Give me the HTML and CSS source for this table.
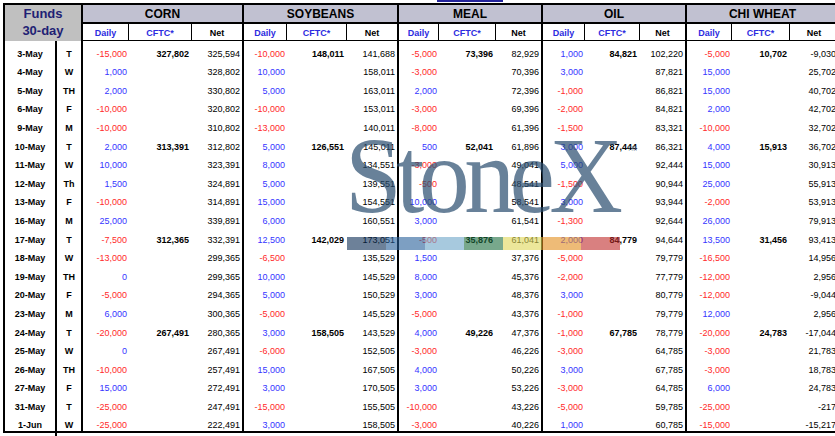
FILE: index.html
```html
<!DOCTYPE html>
<html lang="en">
<head>
<meta charset="utf-8">
<title>Funds 30-day</title>
<link rel="stylesheet" href="styles.css">
</head>
<body>
<div class="page">
  <div class="topline"><span class="link-line"></span></div>
  <div class="sheet">
    <div class="head">
      <div class="funds"><span>Funds</span><span>30-day</span></div>
      <div class="title">CORN</div>
      <div class="title">SOYBEANS</div>
      <div class="title">MEAL</div>
      <div class="title">OIL</div>
      <div class="title last">CHI WHEAT</div>
      <div class="sub blue">Daily</div><div class="sub blue">CFTC*</div><div class="sub net">Net</div>
      <div class="sub blue">Daily</div><div class="sub blue">CFTC*</div><div class="sub net">Net</div>
      <div class="sub blue">Daily</div><div class="sub blue">CFTC*</div><div class="sub net">Net</div>
      <div class="sub blue">Daily</div><div class="sub blue">CFTC*</div><div class="sub net">Net</div>
      <div class="sub blue">Daily</div><div class="sub blue">CFTC*</div><div class="sub net last">Net</div>
    </div>

    <div class="row"><span class="d">3-May</span><span class="w">T</span><span class="neg">-15,000</span><span class="cf">327,802</span><span class="ge">325,594</span><span class="neg">-10,000</span><span class="cf">148,011</span><span class="ge">141,688</span><span class="neg">-5,000</span><span class="cf">73,396</span><span class="ge">82,929</span><span class="pos">1,000</span><span class="cf">84,821</span><span class="ge">102,220</span><span class="neg">-5,000</span><span class="cf">10,702</span><span>-9,030</span></div>
    <div class="row"><span class="d">4-May</span><span class="w">W</span><span class="pos">1,000</span><span class="cf"></span><span class="ge">328,802</span><span class="pos">10,000</span><span class="cf"></span><span class="ge">158,011</span><span class="neg">-3,000</span><span class="cf"></span><span class="ge">70,396</span><span class="pos">3,000</span><span class="cf"></span><span class="ge">87,821</span><span class="pos">15,000</span><span class="cf"></span><span>25,702</span></div>
    <div class="row"><span class="d">5-May</span><span class="w">TH</span><span class="pos">2,000</span><span class="cf"></span><span class="ge">330,802</span><span class="pos">5,000</span><span class="cf"></span><span class="ge">163,011</span><span class="pos">2,000</span><span class="cf"></span><span class="ge">72,396</span><span class="neg">-1,000</span><span class="cf"></span><span class="ge">86,821</span><span class="pos">15,000</span><span class="cf"></span><span>40,702</span></div>
    <div class="row"><span class="d">6-May</span><span class="w">F</span><span class="neg">-10,000</span><span class="cf"></span><span class="ge">320,802</span><span class="neg">-10,000</span><span class="cf"></span><span class="ge">153,011</span><span class="neg">-3,000</span><span class="cf"></span><span class="ge">69,396</span><span class="neg">-2,000</span><span class="cf"></span><span class="ge">84,821</span><span class="pos">2,000</span><span class="cf"></span><span>42,702</span></div>
    <div class="row"><span class="d">9-May</span><span class="w">M</span><span class="neg">-10,000</span><span class="cf"></span><span class="ge">310,802</span><span class="neg">-13,000</span><span class="cf"></span><span class="ge">140,011</span><span class="neg">-8,000</span><span class="cf"></span><span class="ge">61,396</span><span class="neg">-1,500</span><span class="cf"></span><span class="ge">83,321</span><span class="neg">-10,000</span><span class="cf"></span><span>32,702</span></div>
    <div class="row"><span class="d">10-May</span><span class="w">T</span><span class="pos">2,000</span><span class="cf">313,391</span><span class="ge">312,802</span><span class="pos">5,000</span><span class="cf">126,551</span><span class="ge">145,011</span><span class="pos">500</span><span class="cf">52,041</span><span class="ge">61,896</span><span class="pos">3,000</span><span class="cf">87,444</span><span class="ge">86,321</span><span class="pos">4,000</span><span class="cf">15,913</span><span>36,702</span></div>
    <div class="row"><span class="d">11-May</span><span class="w">W</span><span class="pos">10,000</span><span class="cf"></span><span class="ge">323,391</span><span class="pos">8,000</span><span class="cf"></span><span class="ge">134,551</span><span class="neg">-3,000</span><span class="cf"></span><span class="ge">49,041</span><span class="pos">5,000</span><span class="cf"></span><span class="ge">92,444</span><span class="pos">15,000</span><span class="cf"></span><span>30,913</span></div>
    <div class="row"><span class="d">12-May</span><span class="w">Th</span><span class="pos">1,500</span><span class="cf"></span><span class="ge">324,891</span><span class="pos">5,000</span><span class="cf"></span><span class="ge">139,551</span><span class="neg">-500</span><span class="cf"></span><span class="ge">48,541</span><span class="neg">-1,500</span><span class="cf"></span><span class="ge">90,944</span><span class="pos">25,000</span><span class="cf"></span><span>55,913</span></div>
    <div class="row"><span class="d">13-May</span><span class="w">F</span><span class="neg">-10,000</span><span class="cf"></span><span class="ge">314,891</span><span class="pos">15,000</span><span class="cf"></span><span class="ge">154,551</span><span class="pos">10,000</span><span class="cf"></span><span class="ge">58,541</span><span class="pos">3,000</span><span class="cf"></span><span class="ge">93,944</span><span class="neg">-2,000</span><span class="cf"></span><span>53,913</span></div>
    <div class="row"><span class="d">16-May</span><span class="w">M</span><span class="pos">25,000</span><span class="cf"></span><span class="ge">339,891</span><span class="pos">6,000</span><span class="cf"></span><span class="ge">160,551</span><span class="pos">3,000</span><span class="cf"></span><span class="ge">61,541</span><span class="neg">-1,300</span><span class="cf"></span><span class="ge">92,644</span><span class="pos">26,000</span><span class="cf"></span><span>79,913</span></div>
    <div class="row"><span class="d">17-May</span><span class="w">T</span><span class="neg">-7,500</span><span class="cf">312,365</span><span class="ge">332,391</span><span class="pos">12,500</span><span class="cf">142,029</span><span class="ge">173,051</span><span class="neg">-500</span><span class="cf">35,876</span><span class="ge">61,041</span><span class="pos">2,000</span><span class="cf">84,779</span><span class="ge">94,644</span><span class="pos">13,500</span><span class="cf">31,456</span><span>93,413</span></div>
    <div class="row"><span class="d">18-May</span><span class="w">W</span><span class="neg">-13,000</span><span class="cf"></span><span class="ge">299,365</span><span class="neg">-6,500</span><span class="cf"></span><span class="ge">135,529</span><span class="pos">1,500</span><span class="cf"></span><span class="ge">37,376</span><span class="neg">-5,000</span><span class="cf"></span><span class="ge">79,779</span><span class="neg">-16,500</span><span class="cf"></span><span>14,956</span></div>
    <div class="row"><span class="d">19-May</span><span class="w">TH</span><span class="pos">0</span><span class="cf"></span><span class="ge">299,365</span><span class="pos">10,000</span><span class="cf"></span><span class="ge">145,529</span><span class="pos">8,000</span><span class="cf"></span><span class="ge">45,376</span><span class="neg">-2,000</span><span class="cf"></span><span class="ge">77,779</span><span class="neg">-12,000</span><span class="cf"></span><span>2,956</span></div>
    <div class="row"><span class="d">20-May</span><span class="w">F</span><span class="neg">-5,000</span><span class="cf"></span><span class="ge">294,365</span><span class="pos">5,000</span><span class="cf"></span><span class="ge">150,529</span><span class="pos">3,000</span><span class="cf"></span><span class="ge">48,376</span><span class="pos">3,000</span><span class="cf"></span><span class="ge">80,779</span><span class="neg">-12,000</span><span class="cf"></span><span>-9,044</span></div>
    <div class="row"><span class="d">23-May</span><span class="w">M</span><span class="pos">6,000</span><span class="cf"></span><span class="ge">300,365</span><span class="neg">-5,000</span><span class="cf"></span><span class="ge">145,529</span><span class="neg">-5,000</span><span class="cf"></span><span class="ge">43,376</span><span class="neg">-1,000</span><span class="cf"></span><span class="ge">79,779</span><span class="pos">12,000</span><span class="cf"></span><span>2,956</span></div>
    <div class="row"><span class="d">24-May</span><span class="w">T</span><span class="neg">-20,000</span><span class="cf">267,491</span><span class="ge">280,365</span><span class="pos">3,000</span><span class="cf">158,505</span><span class="ge">143,529</span><span class="pos">4,000</span><span class="cf">49,226</span><span class="ge">47,376</span><span class="neg">-1,000</span><span class="cf">67,785</span><span class="ge">78,779</span><span class="neg">-20,000</span><span class="cf">24,783</span><span>-17,044</span></div>
    <div class="row"><span class="d">25-May</span><span class="w">W</span><span class="pos">0</span><span class="cf"></span><span class="ge">267,491</span><span class="neg">-6,000</span><span class="cf"></span><span class="ge">152,505</span><span class="neg">-3,000</span><span class="cf"></span><span class="ge">46,226</span><span class="neg">-3,000</span><span class="cf"></span><span class="ge">64,785</span><span class="neg">-3,000</span><span class="cf"></span><span>21,783</span></div>
    <div class="row"><span class="d">26-May</span><span class="w">TH</span><span class="neg">-10,000</span><span class="cf"></span><span class="ge">257,491</span><span class="pos">15,000</span><span class="cf"></span><span class="ge">167,505</span><span class="pos">4,000</span><span class="cf"></span><span class="ge">50,226</span><span class="pos">3,000</span><span class="cf"></span><span class="ge">67,785</span><span class="neg">-3,000</span><span class="cf"></span><span>18,783</span></div>
    <div class="row"><span class="d">27-May</span><span class="w">F</span><span class="pos">15,000</span><span class="cf"></span><span class="ge">272,491</span><span class="pos">3,000</span><span class="cf"></span><span class="ge">170,505</span><span class="pos">3,000</span><span class="cf"></span><span class="ge">53,226</span><span class="neg">-3,000</span><span class="cf"></span><span class="ge">64,785</span><span class="pos">6,000</span><span class="cf"></span><span>24,783</span></div>
    <div class="row"><span class="d">31-May</span><span class="w">T</span><span class="neg">-25,000</span><span class="cf"></span><span class="ge">247,491</span><span class="neg">-15,000</span><span class="cf"></span><span class="ge">155,505</span><span class="neg">-10,000</span><span class="cf"></span><span class="ge">43,226</span><span class="neg">-5,000</span><span class="cf"></span><span class="ge">59,785</span><span class="neg">-25,000</span><span class="cf"></span><span>-217</span></div>
    <div class="row"><span class="d">1-Jun</span><span class="w">W</span><span class="neg">-25,000</span><span class="cf"></span><span class="ge">222,491</span><span class="pos">3,000</span><span class="cf"></span><span class="ge">158,505</span><span class="neg">-3,000</span><span class="cf"></span><span class="ge">40,226</span><span class="pos">1,000</span><span class="cf"></span><span class="ge">60,785</span><span class="neg">-15,000</span><span class="cf"></span><span>-15,217</span></div>
  </div>
  <div class="stub"></div>

  <div class="logo" aria-hidden="true">StoneX</div>
  <div class="tm" aria-hidden="true">TM</div>
  <div class="stripe" aria-hidden="true">
    <span class="s1"></span><span class="s2"></span><span class="s3"></span><span class="s4"></span><span class="s5"></span><span class="s6"></span><span class="s7"></span>
  </div>
</div>
</body>
</html>
```

FILE: styles.css
```css
:root {
  --cols: 52px 26px 46px 63px 52px 43px 60px 52px 40px 57px 47px 42px 55px 47px 45px 58px 48px;
}

* { box-sizing: border-box; }

html, body {
  margin: 0;
  padding: 0;
  background: #ffffff;
  overflow: hidden;
}

.page {
  position: relative;
  width: 835px;
  height: 436px;
  overflow: hidden;
  font-family: "Liberation Sans", Arial, sans-serif;
  color: #000;
}

.topline {
  height: 3px;
  display: flex;
}

.link-line {
  display: block;
  margin-left: 437px;
  width: 66px;
  height: 2px;
  background: #23239a;
}

.sheet {
  margin-left: 3px;
  width: 835px;
  border-left: 2px solid #000;
  border-top: 2px solid #000;
  border-bottom: 2px solid #000;
  display: flex;
  flex-direction: column;
}

.head {
  display: grid;
  grid-template-columns: var(--cols);
  grid-template-rows: 19px 17px;
}

.funds {
  grid-column: 1 / 3;
  grid-row: 1 / 3;
  background: #c0c0c0;
  border-right: 2px solid #000;
  display: flex;
  flex-direction: column;
  align-items: center;
  color: #1f1f74;
  font-weight: bold;
  font-size: 13px;
  line-height: 17px;
}

.title {
  grid-column: span 3;
  background: #c1c1d1;
  border-bottom: 2px solid #000;
  border-right: 2px solid #000;
  display: flex;
  align-items: center;
  justify-content: center;
  font-weight: bold;
  font-size: 12px;
  line-height: 14px;
}

.title.last { border-right: 0; }

.sub {
  border-bottom: 1px solid #000;
  border-right: 1px solid #000;
  display: flex;
  align-items: flex-end;
  justify-content: center;
  padding-bottom: 1px;
  font-weight: bold;
  font-size: 9px;
  line-height: 11px;
}

.sub.blue { color: #2c2ce0; }
.sub.net { border-right: 2px solid #000; }
.sub.last { border-right: 0; }

.row {
  display: grid;
  grid-template-columns: var(--cols);
  height: 18.6px;
}

.row > span {
  display: flex;
  align-items: flex-end;
  justify-content: flex-end;
  padding-right: 2px;
  font-size: 9px;
  line-height: 11px;
  white-space: nowrap;
}

.row > .d,
.row > .w {
  justify-content: center;
  padding-right: 0;
  font-weight: bold;
  border-right: 2px solid #000;
}

.row > .cf {
  padding-right: 3px;
  font-weight: bold;
}

.row > .ge { border-right: 2px solid #000; }

.neg { color: #ff2a2a; }
.pos { color: #3535ff; }

.stub {
  margin-left: 55px;
  width: 2px;
  height: 3px;
  background: #000;
}

/* StoneX watermark laid over the sheet */
.logo {
  position: absolute;
  left: 345px;
  top: 122px;
  font-family: "Liberation Serif", "Times New Roman", serif;
  font-size: 108px;
  line-height: 1;
  letter-spacing: -6px;
  color: rgba(40, 75, 110, 0.7);
  transform: scaleX(0.945);
  transform-origin: left top;
  pointer-events: none;
  white-space: nowrap;
}

.tm {
  position: absolute;
  left: 627px;
  top: 145px;
  font-size: 7px;
  line-height: 8px;
  color: rgba(120, 140, 160, 0.85);
  pointer-events: none;
}

.stripe {
  position: absolute;
  left: 347px;
  top: 237px;
  width: 273px;
  height: 13px;
  display: flex;
  pointer-events: none;
}

.stripe span { flex: 1; }
.s1 { background: rgba(12, 45, 85, 0.6); }
.s2 { background: rgba(38, 95, 153, 0.6); }
.s3 { background: rgba(108, 165, 200, 0.6); }
.s4 { background: rgba(30, 110, 63, 0.6); }
.s5 { background: rgba(223, 215, 87, 0.6); }
.s6 { background: rgba(227, 142, 28, 0.6); }
.s7 { background: rgba(192, 43, 43, 0.6); }
```
